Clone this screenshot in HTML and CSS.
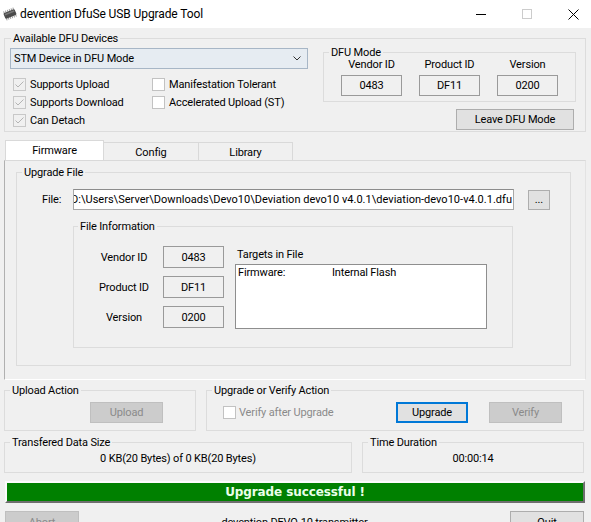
FILE: index.html
```html
<!DOCTYPE html>
<html>
<head>
<meta charset="utf-8">
<link rel="stylesheet" href="styles.css">
</head>
<body>
<div class="titlebar">
  <svg class="app-icon" width="16" height="14" viewBox="0 0 16 14">
    <g transform="rotate(-22 8 7)">
      <path d="M3 4V2.2M5 4V2.2M7 4V2.2M9 4V2.2M11 4V2.2M13 4V2.2M3 10v1.8M5 10v1.8M7 10v1.8M9 10v1.8M11 10v1.8M13 10v1.8" stroke="#9a9a9a" stroke-width="1"/>
      <rect x="2" y="4" width="12" height="6" rx="1" fill="#4a4a4a"/>
      <rect x="3" y="5" width="10" height="1.5" fill="#777"/>
    </g>
  </svg>
  <span class="title">devention DfuSe USB Upgrade Tool</span>
  <div class="win-controls">
    <div class="wc"><svg width="10" height="10" viewBox="0 0 10 10"><path d="M0 5.5H10" stroke="#000" stroke-width="1"/></svg></div>
    <div class="wc"><svg width="10" height="10" viewBox="0 0 10 10"><rect x="0.5" y="0.5" width="9" height="9" fill="none" stroke="#cccccc" stroke-width="1"/></svg></div>
    <div class="wc"><svg width="11" height="11" viewBox="0 0 11 11"><path d="M0.5 0.5L10.5 10.5M10.5 0.5L0.5 10.5" stroke="#000" stroke-width="1"/></svg></div>
  </div>
</div>

<div class="grp grp-top">
  <div class="gt gt-6">Available DFU Devices</div>
  <div class="top-row">
    <div class="top-left">
      <div class="combo">
        <span>STM Device in DFU Mode</span>
        <svg width="8" height="5" viewBox="0 0 8 5"><path d="M0.5 0.5L4 4L7.5 0.5" fill="none" stroke="#333" stroke-width="1"/></svg>
      </div>
      <div class="cb-grid">
        <div class="cb"><span class="box checked"><svg width="11" height="11" viewBox="0 0 11 11"><path d="M1.5 5.5L4 8L9.5 2.5" fill="none" stroke="#b4b4b4" stroke-width="1"/></svg></span>Supports Upload</div>
        <div class="cb"><span class="box"></span>Manifestation Tolerant</div>
        <div class="cb"><span class="box checked"><svg width="11" height="11" viewBox="0 0 11 11"><path d="M1.5 5.5L4 8L9.5 2.5" fill="none" stroke="#b4b4b4" stroke-width="1"/></svg></span>Supports Download</div>
        <div class="cb"><span class="box"></span>Accelerated Upload (ST)</div>
        <div class="cb"><span class="box checked"><svg width="11" height="11" viewBox="0 0 11 11"><path d="M1.5 5.5L4 8L9.5 2.5" fill="none" stroke="#b4b4b4" stroke-width="1"/></svg></span>Can Detach</div>
      </div>
    </div>
    <div class="top-right">
      <div class="grp grp-dfu">
        <div class="gt gt-sm">DFU Mode</div>
        <div class="dfu-cols">
          <div class="dfu-col"><div class="dfu-label">Vendor ID</div><div class="valbox">0483</div></div>
          <div class="dfu-col"><div class="dfu-label">Product ID</div><div class="valbox">DF11</div></div>
          <div class="dfu-col"><div class="dfu-label">Version</div><div class="valbox">0200</div></div>
        </div>
      </div>
      <div class="btn btn-leave">Leave DFU Mode</div>
    </div>
  </div>
</div>

<div class="tabs">
  <div class="tab tab-active">Firmware</div>
  <div class="tab tab-config">Config</div>
  <div class="tab tab-library">Library</div>
</div>
<div class="panel">
  <div class="grp grp-upfile">
    <div class="gt">Upgrade File</div>
    <div class="file-row">
      <span class="file-label">File:</span>
      <div class="file-field"><span>D:\Users\Server\Downloads\Devo10\Deviation devo10 v4.0.1\deviation-devo10-v4.0.1.dfu</span></div>
      <div class="btn btn-browse">...</div>
    </div>
    <div class="grp grp-info">
      <div class="gt gt-4">File Information</div>
      <div class="info-row">
        <div class="info-grid">
          <div class="info-label">Vendor ID</div><div class="valbox">0483</div>
          <div class="info-label">Product ID</div><div class="valbox">DF11</div>
          <div class="info-label">Version</div><div class="valbox">0200</div>
        </div>
        <div class="targets">
          <div class="targets-label">Targets in File</div>
          <div class="listbox">
            <div class="list-item"><span class="li-name">Firmware:</span><span>Internal Flash</span></div>
          </div>
        </div>
      </div>
    </div>
  </div>
</div>

<div class="action-row">
  <div class="grp grp-upload">
    <div class="gt">Upload Action</div>
    <div class="btn btn-disabled btn-upload">Upload</div>
  </div>
  <div class="grp grp-verify">
    <div class="gt">Upgrade or Verify Action</div>
    <div class="verify-row">
      <div class="cb cb-disabled"><span class="box"></span>Verify after Upgrade</div>
      <div class="btn btn-focus">Upgrade</div>
      <div class="btn btn-disabled btn-verify">Verify</div>
    </div>
  </div>
</div>

<div class="stat-row">
  <div class="grp grp-size">
    <div class="gt">Transfered Data Size</div>
    <div class="stat-val">0 KB(20 Bytes) of 0 KB(20 Bytes)</div>
  </div>
  <div class="grp grp-time">
    <div class="gt">Time Duration</div>
    <div class="stat-val">00:00:14</div>
  </div>
</div>

<div class="progress"><span>Upgrade successful !</span></div>

<div class="bottom-row">
  <div class="btn btn-disabled btn-abort">Abort</div>
  <div class="device-name">devention DEVO-10 transmitter</div>
  <div class="btn btn-quit">Quit</div>
</div>
</body>
</html>
```

FILE: styles.css
```css
html, body {
  margin: 0;
  padding: 0;
  overflow: hidden;
}
body {
  width: 591px;
  height: 522px;
  background: #f0f0f0;
  font-family: Roboto, "Noto Sans", sans-serif;
  font-size: 11px;
  letter-spacing: -0.15px;
  color: #000;
}
* { box-sizing: border-box; }

/* title bar */
.titlebar {
  height: 28px;
  background: #fff;
  display: flex;
  align-items: center;
}
.app-icon { margin-left: 2px; flex: none; }
.title {
  margin-left: 2px;
  font-size: 12px;
  letter-spacing: -0.1px;
}
.win-controls {
  margin-left: auto;
  margin-right: -5px;
  display: flex;
}
.wc {
  width: 46px;
  height: 28px;
  display: flex;
  align-items: center;
  justify-content: center;
}

/* group boxes */
.grp {
  border: 1px solid #dcdcdc;
}
.gt {
  width: max-content;
  height: 16px;
  line-height: 16px;
  margin: -8px 0 -8px 5px;
  padding: 0 2px;
  background: #f0f0f0;
}
.gt-6 { margin-left: 6px; }
.gt-4 { margin-left: 4px; }
.gt-sm {
  height: 12px;
  line-height: 12px;
  margin-top: -6px;
  margin-bottom: -6px;
}

.grp-top {
  margin: 10px 0 0 4px;
  width: 582px;
  height: 94px;
}
.top-row { display: flex; }
.top-left {
  margin-left: 5px;
  width: 298px;
}
.combo {
  margin-top: 9px;
  height: 21px;
  border: 1px solid #a7b6c6;
  background: #e6ecf2;
  display: flex;
  align-items: center;
  justify-content: space-between;
  padding: 0 6px 0 3px;
}
.cb-grid {
  margin-top: 6px;
  display: grid;
  grid-template-columns: 139px auto;
  grid-auto-rows: 18px;
}
.cb {
  display: flex;
  align-items: center;
  gap: 4px;
  padding-left: 3px;
}
.box {
  width: 13px;
  height: 13px;
  border: 1px solid #c2c2c2;
  background: #fff;
  flex: none;
  display: flex;
}
.box.checked {
  background: #f0f0f0;
  border-color: #c8c8c8;
}

.top-right {
  margin-left: 15px;
  display: flex;
  flex-direction: column;
}
.grp-dfu {
  margin-top: 13px;
  width: 253px;
  height: 50px;
}
.dfu-cols {
  display: flex;
  gap: 17px;
  padding: 6px 0 0 17px;
}
.dfu-col {
  width: 61px;
  display: flex;
  flex-direction: column;
  align-items: center;
}
.dfu-label {
  height: 12px;
  line-height: 12px;
  white-space: nowrap;
}
.valbox {
  width: 61px;
  height: 21px;
  border: 1px solid #9a9a9a;
  background: #f0f0f0;
  display: flex;
  align-items: center;
  justify-content: center;
}
.dfu-col .valbox { margin-top: 4px; }

.btn {
  height: 21px;
  border: 1px solid #adadad;
  background: #e1e1e1;
  display: flex;
  align-items: center;
  justify-content: center;
  flex: none;
}
.btn-leave {
  margin: 7px 0 0 133px;
  width: 118px;
}
.btn-disabled {
  background: #cccccc;
  border-color: #bfbfbf;
  color: #8a8a8a;
}
.btn-focus {
  width: 72px;
  border: 2px solid #0078d7;
  background: #e1e1e1;
}

/* tabs */
.tabs {
  margin: 8px 0 0 5px;
  height: 20px;
  display: flex;
  align-items: flex-end;
}
.tab {
  height: 18px;
  display: flex;
  align-items: center;
  justify-content: center;
  border-top: 1px solid #d9d9d9;
  border-right: 1px solid #d9d9d9;
  padding-top: 1px;
}
.tab-active {
  width: 99px;
  height: 20px;
  background: #fff;
  border-left: 1px solid #d9d9d9;
  padding-top: 0;
}
.tab-config { width: 95px; }
.tab-library { width: 94px; }

.panel {
  margin-left: 4px;
  width: 582px;
  height: 220px;
  border: 1px solid #d9d9d9;
  border-left-color: #b0b0b0;
  border-bottom-color: #ffffff;
  border-right-color: #e3e3e3;
  padding: 11px 0 0 11px;
}
.grp-upfile {
  width: 555px;
  height: 194px;
}
.file-row {
  margin-top: 16px;
  height: 21px;
  display: flex;
  align-items: center;
  padding-left: 25px;
}
.file-label {
  width: 31px;
  flex: none;
}
.file-field {
  width: 441px;
  height: 21px;
  flex: none;
  border: 1px solid #a8a8a8;
  border-top-color: #8c8c8c;
  background: #fff;
  display: flex;
  align-items: center;
  justify-content: flex-end;
  overflow: hidden;
  white-space: nowrap;
  padding-right: 1px;
  letter-spacing: 0.02px;
}
.btn-browse {
  margin-left: 14px;
  width: 22px;
  height: 20px;
}

.grp-info {
  margin: 16px 0 0 56px;
  width: 440px;
  height: 122px;
}
.info-row {
  display: flex;
}
.info-grid {
  margin: 19px 0 0 20px;
  display: grid;
  grid-template-columns: 60px 61px;
  grid-auto-rows: 22px;
  row-gap: 8px;
  column-gap: 9px;
}
.info-label {
  display: flex;
  align-items: center;
  justify-content: center;
  white-space: nowrap;
  padding-top: 1px;
}
.info-grid .valbox { height: 22px; }
.targets {
  margin: 21px 0 0 11px;
}
.targets-label {
  height: 14px;
  line-height: 14px;
  padding-left: 2px;
}
.listbox {
  margin-top: 2px;
  width: 252px;
  height: 65px;
  border: 1px solid #8e8e8e;
  background: #fff;
  padding: 1px 0 0 2px;
}
.list-item {
  display: flex;
  height: 14px;
  line-height: 14px;
}
.li-name { width: 94px; }

/* action groups */
.action-row {
  display: flex;
  margin-top: 10px;
}
.grp-upload {
  margin-left: 4px;
  width: 192px;
  height: 41px;
}
.btn-upload {
  margin: 11px 0 0 85px;
  width: 73px;
}
.grp-verify {
  margin-left: 10px;
  width: 378px;
  height: 41px;
}
.verify-row {
  margin-top: 11px;
  height: 21px;
  display: flex;
  align-items: center;
  padding-left: 13px;
}
.cb-disabled {
  width: 176px;
  gap: 3px;
  color: #8a8a8a;
}
.cb-disabled .box { border-color: #c2c2c2; }
.btn-verify {
  margin-left: 21px;
  width: 73px;
}

.stat-row {
  display: flex;
  margin-top: 11px;
}
.grp-size {
  margin-left: 4px;
  width: 348px;
  height: 31px;
}
.grp-time {
  margin-left: 10px;
  width: 222px;
  height: 31px;
}
.stat-val {
  margin-top: 9px;
  height: 14px;
  line-height: 14px;
  text-align: center;
}

/* progress */
.progress {
  margin: 8px 0 0 5px;
  width: 580px;
  height: 22px;
  background: #008000;
  border-style: solid;
  border-width: 2px 2px 2px 2px;
  border-color: #fbfbfb #6e6e6e #6e6e6e #fbfbfb;
  display: flex;
  align-items: center;
  justify-content: center;
}
.progress span {
  font-family: "DejaVu Sans", Verdana, sans-serif;
  font-weight: bold;
  font-size: 12px;
  letter-spacing: -0.1px;
  color: #eaffea;
}

/* bottom */
.bottom-row {
  margin-top: 8px;
  height: 23px;
  display: flex;
  align-items: center;
}
.btn-abort {
  margin-left: 5px;
  width: 74px;
  height: 23px;
}
.device-name {
  flex: 1;
  text-align: center;
}
.btn-quit {
  margin-right: 7px;
  width: 74px;
  height: 23px;
}
```
